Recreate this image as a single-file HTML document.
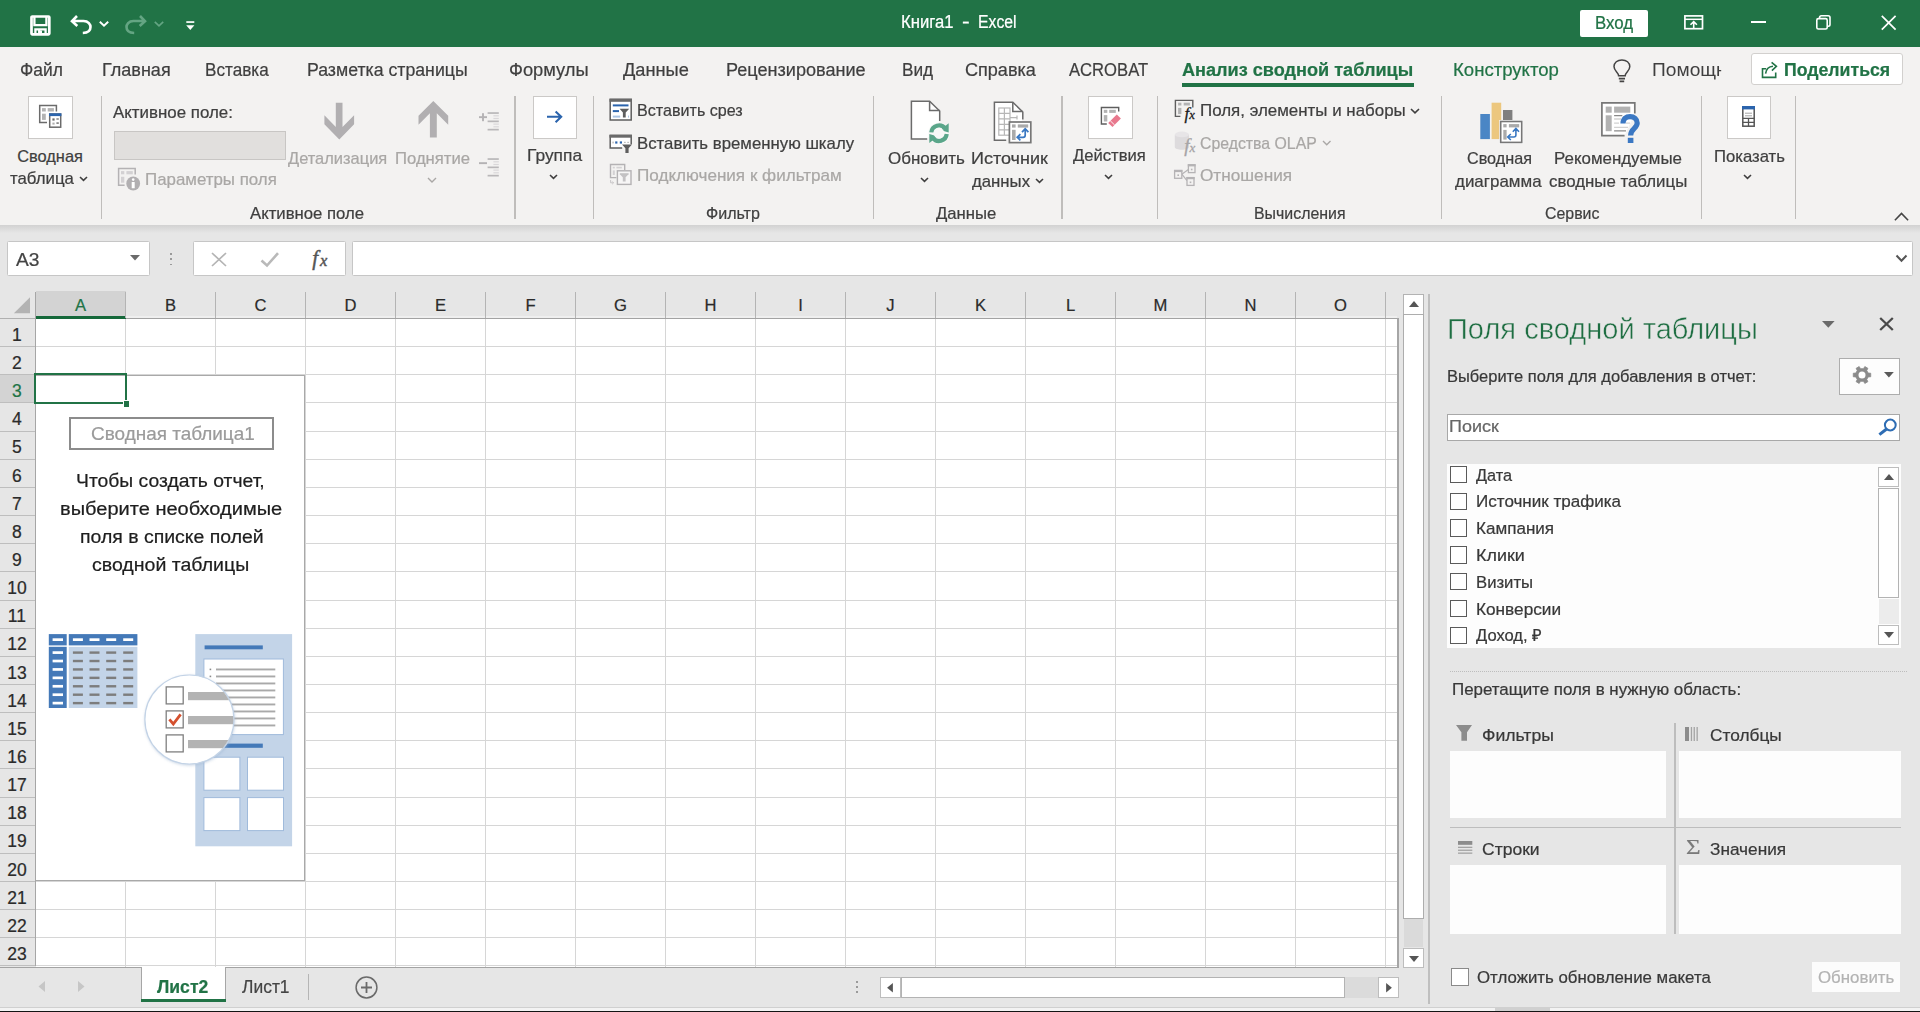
<!DOCTYPE html>
<html lang="ru"><head><meta charset="utf-8"><title>Книга1 - Excel</title>
<style>
html,body{margin:0;padding:0;}
body{width:1920px;height:1012px;overflow:hidden;position:relative;background:#e6e6e6;font-family:"Liberation Sans",sans-serif;}
.a{position:absolute;box-sizing:border-box;}
.t{position:absolute;white-space:nowrap;line-height:1;transform-origin:0 0;font-family:"Liberation Sans",sans-serif;-webkit-text-stroke:0.22px currentColor;}
svg{overflow:visible;}
</style></head><body>
<div class="a" style="left:0.00px;top:0.00px;width:1920.00px;height:47.40px;background:#217346;"></div>
<div class="a" style="left:1580.00px;top:10.00px;width:67.50px;height:26.50px;background:#fff;border-radius:2px;"></div>
<div class="a" style="left:0.00px;top:47.40px;width:1920.00px;height:177.20px;background:#f3f2f1;"></div>
<div class="a" style="left:1182.00px;top:83.30px;width:231.70px;height:3.40px;background:#217346;"></div>
<div class="a" style="left:1750.50px;top:53.00px;width:152.00px;height:32.00px;background:#fff;border:1px solid #d2d0ce;border-radius:3px;"></div>
<div class="a" style="left:0.00px;top:224.60px;width:1920.00px;height:8.00px;background:linear-gradient(#d2d2d2,#e6e6e6);"></div>
<div class="a" style="left:100.70px;top:96.00px;width:1.30px;height:123.00px;background:#bfbdbb;"></div>
<div class="a" style="left:514.40px;top:96.00px;width:1.30px;height:123.00px;background:#bfbdbb;"></div>
<div class="a" style="left:593.10px;top:96.00px;width:1.30px;height:123.00px;background:#bfbdbb;"></div>
<div class="a" style="left:872.90px;top:96.00px;width:1.30px;height:123.00px;background:#bfbdbb;"></div>
<div class="a" style="left:1061.40px;top:96.00px;width:1.30px;height:123.00px;background:#bfbdbb;"></div>
<div class="a" style="left:1156.90px;top:96.00px;width:1.30px;height:123.00px;background:#bfbdbb;"></div>
<div class="a" style="left:1441.10px;top:96.00px;width:1.30px;height:123.00px;background:#bfbdbb;"></div>
<div class="a" style="left:1701.20px;top:96.00px;width:1.30px;height:123.00px;background:#bfbdbb;"></div>
<div class="a" style="left:1795.20px;top:96.00px;width:1.30px;height:123.00px;background:#bfbdbb;"></div>
<div class="a" style="left:28.00px;top:95.80px;width:44.70px;height:43.00px;background:#fff;border:1.2px solid #cbc9c7;"></div>
<svg class="a" style="left:78.50px;top:175.50px;" width="9" height="5.9" viewBox="0 0 9 5.9"><path d="M1 1 L4.50 4.30 L8 1" fill="none" stroke="#3f3f3f" stroke-width="1.6"/></svg>
<div class="a" style="left:113.70px;top:130.80px;width:172.60px;height:29.00px;background:#e1dfdd;border:1px solid #c8c6c4;"></div>
<svg class="a" style="left:427.00px;top:177.00px;" width="10" height="6.5" viewBox="0 0 10 6.5"><path d="M1 1 L5.00 4.90 L9 1" fill="none" stroke="#a9a7a5" stroke-width="1.4"/></svg>
<div class="a" style="left:532.70px;top:95.80px;width:44.70px;height:43.00px;background:#fff;border:1.2px solid #cbc9c7;"></div>
<svg class="a" style="left:549.00px;top:174.00px;" width="9" height="5.9" viewBox="0 0 9 5.9"><path d="M1 1 L4.50 4.30 L8 1" fill="none" stroke="#3f3f3f" stroke-width="1.6"/></svg>
<svg class="a" style="left:920.00px;top:177.00px;" width="9" height="5.9" viewBox="0 0 9 5.9"><path d="M1 1 L4.50 4.30 L8 1" fill="none" stroke="#3f3f3f" stroke-width="1.6"/></svg>
<svg class="a" style="left:1034.50px;top:178.00px;" width="9" height="5.9" viewBox="0 0 9 5.9"><path d="M1 1 L4.50 4.30 L8 1" fill="none" stroke="#3f3f3f" stroke-width="1.6"/></svg>
<div class="a" style="left:1088.20px;top:95.80px;width:44.70px;height:43.00px;background:#fff;border:1.2px solid #cbc9c7;"></div>
<svg class="a" style="left:1104.30px;top:174.00px;" width="9" height="5.9" viewBox="0 0 9 5.9"><path d="M1 1 L4.50 4.30 L8 1" fill="none" stroke="#3f3f3f" stroke-width="1.6"/></svg>
<svg class="a" style="left:1409.80px;top:107.50px;" width="10" height="6.5" viewBox="0 0 10 6.5"><path d="M1 1 L5.00 4.90 L9 1" fill="none" stroke="#3f3f3f" stroke-width="1.6"/></svg>
<svg class="a" style="left:1321.50px;top:140.00px;" width="9.5" height="6.3" viewBox="0 0 9.5 6.3"><path d="M1 1 L4.75 4.70 L8.5 1" fill="none" stroke="#a9a7a5" stroke-width="1.4"/></svg>
<div class="a" style="left:1726.60px;top:95.80px;width:44.70px;height:43.00px;background:#fff;border:1.2px solid #cbc9c7;"></div>
<svg class="a" style="left:1743.00px;top:174.00px;" width="9" height="5.9" viewBox="0 0 9 5.9"><path d="M1 1 L4.50 4.30 L8 1" fill="none" stroke="#3f3f3f" stroke-width="1.6"/></svg>
<svg class="a" style="left:1893.00px;top:210.60px;" width="17" height="11" viewBox="0 0 17 11"><path d="M1.9 9.2 L8.5 2.5 L15.1 9.2" fill="none" stroke="#444" stroke-width="1.6"/></svg>
<div class="a" style="left:7.30px;top:240.90px;width:142.30px;height:35.40px;background:#fff;border:1.4px solid #c6c6c6;border-radius:1.5px;"></div>
<svg class="a" style="left:130.00px;top:254.60px;" width="10" height="5.6" viewBox="0 0 10 5.6"><path d="M0 0 H10 L5.0 5.6 Z" fill="#6a6a6a"/></svg>
<div class="a" style="left:170.00px;top:253.20px;width:1.80px;height:1.80px;background:#9a9a9a;"></div>
<div class="a" style="left:170.00px;top:258.40px;width:1.80px;height:1.80px;background:#9a9a9a;"></div>
<div class="a" style="left:170.00px;top:263.60px;width:1.80px;height:1.80px;background:#9a9a9a;"></div>
<div class="a" style="left:192.70px;top:240.90px;width:153.80px;height:35.40px;background:#fff;border:1.4px solid #c6c6c6;border-radius:1.5px;"></div>
<svg class="a" style="left:211.00px;top:252.00px;" width="16" height="15" viewBox="0 0 16 15"><path d="M1 1 L15 14 M15 1 L1 14" stroke="#b4b4b4" stroke-width="1.7" fill="none"/></svg>
<svg class="a" style="left:260.00px;top:252.00px;" width="20" height="15" viewBox="0 0 20 15"><path d="M1.5 8.5 L7 13.5 L18 1.2" stroke="#b9b9b9" stroke-width="2.6" fill="none"/></svg>
<div class="a" style="left:351.70px;top:240.90px;width:1561.20px;height:35.40px;background:#fff;border:1.4px solid #c6c6c6;border-radius:1.5px;"></div>
<svg class="a" style="left:1895.00px;top:254.00px;" width="13" height="9" viewBox="0 0 13 9"><path d="M1.5 1.5 L6.5 6.8 L11.5 1.5" fill="none" stroke="#555" stroke-width="2"/></svg>
<div class="a" style="left:35.50px;top:318.30px;width:1362.00px;height:649.20px;background:#fff;"></div>
<div class="a" style="left:0.00px;top:291.20px;width:1397.50px;height:27.10px;background:#e6e6e6;"></div>
<div class="a" style="left:0.00px;top:318.30px;width:35.50px;height:649.50px;background:#e6e6e6;"></div>
<div class="a" style="left:36.00px;top:291.20px;width:90.00px;height:25.10px;background:#d3d3d3;"></div>
<div class="a" style="left:35.20px;top:316.00px;width:91.00px;height:3.10px;background:#15683a;"></div>
<div class="a" style="left:0.00px;top:375.10px;width:35.00px;height:28.15px;background:#d3d3d3;"></div>
<svg class="a" style="left:13.40px;top:296.00px;" width="18" height="18" viewBox="0 0 18 18"><path d="M17 1.2 V17.3 H0.9 Z" fill="#b3b3b3"/></svg>
<div class="a" style="left:34.60px;top:291.70px;width:1.50px;height:27.10px;background:#a6a6a6;"></div>
<div class="a" style="left:0.00px;top:317.90px;width:35.50px;height:1.50px;background:#b0b0b0;"></div>
<div class="a" style="left:126.10px;top:317.60px;width:1271.40px;height:1.60px;background:#a3a3a3;"></div>
<div class="a" style="left:126.10px;top:316.40px;width:1271.40px;height:1.20px;background:#efefef;"></div>
<div class="a" style="left:124.75px;top:292.20px;width:1.40px;height:26.10px;background:#b4b4b4;"></div>
<div class="a" style="left:214.75px;top:292.20px;width:1.40px;height:26.10px;background:#b4b4b4;"></div>
<div class="a" style="left:304.75px;top:292.20px;width:1.40px;height:26.10px;background:#b4b4b4;"></div>
<div class="a" style="left:394.75px;top:292.20px;width:1.40px;height:26.10px;background:#b4b4b4;"></div>
<div class="a" style="left:484.75px;top:292.20px;width:1.40px;height:26.10px;background:#b4b4b4;"></div>
<div class="a" style="left:574.75px;top:292.20px;width:1.40px;height:26.10px;background:#b4b4b4;"></div>
<div class="a" style="left:664.75px;top:292.20px;width:1.40px;height:26.10px;background:#b4b4b4;"></div>
<div class="a" style="left:754.75px;top:292.20px;width:1.40px;height:26.10px;background:#b4b4b4;"></div>
<div class="a" style="left:844.75px;top:292.20px;width:1.40px;height:26.10px;background:#b4b4b4;"></div>
<div class="a" style="left:934.75px;top:292.20px;width:1.40px;height:26.10px;background:#b4b4b4;"></div>
<div class="a" style="left:1024.75px;top:292.20px;width:1.40px;height:26.10px;background:#b4b4b4;"></div>
<div class="a" style="left:1114.75px;top:292.20px;width:1.40px;height:26.10px;background:#b4b4b4;"></div>
<div class="a" style="left:1204.75px;top:292.20px;width:1.40px;height:26.10px;background:#b4b4b4;"></div>
<div class="a" style="left:1294.75px;top:292.20px;width:1.40px;height:26.10px;background:#b4b4b4;"></div>
<div class="a" style="left:1384.75px;top:292.20px;width:1.40px;height:26.10px;background:#b4b4b4;"></div>
<div class="a" style="left:124.85px;top:319.30px;width:1.10px;height:648.00px;background:#d6d6d6;"></div>
<div class="a" style="left:214.85px;top:319.30px;width:1.10px;height:648.00px;background:#d6d6d6;"></div>
<div class="a" style="left:304.85px;top:319.30px;width:1.10px;height:648.00px;background:#d6d6d6;"></div>
<div class="a" style="left:394.85px;top:319.30px;width:1.10px;height:648.00px;background:#d6d6d6;"></div>
<div class="a" style="left:484.85px;top:319.30px;width:1.10px;height:648.00px;background:#d6d6d6;"></div>
<div class="a" style="left:574.85px;top:319.30px;width:1.10px;height:648.00px;background:#d6d6d6;"></div>
<div class="a" style="left:664.85px;top:319.30px;width:1.10px;height:648.00px;background:#d6d6d6;"></div>
<div class="a" style="left:754.85px;top:319.30px;width:1.10px;height:648.00px;background:#d6d6d6;"></div>
<div class="a" style="left:844.85px;top:319.30px;width:1.10px;height:648.00px;background:#d6d6d6;"></div>
<div class="a" style="left:934.85px;top:319.30px;width:1.10px;height:648.00px;background:#d6d6d6;"></div>
<div class="a" style="left:1024.85px;top:319.30px;width:1.10px;height:648.00px;background:#d6d6d6;"></div>
<div class="a" style="left:1114.85px;top:319.30px;width:1.10px;height:648.00px;background:#d6d6d6;"></div>
<div class="a" style="left:1204.85px;top:319.30px;width:1.10px;height:648.00px;background:#d6d6d6;"></div>
<div class="a" style="left:1294.85px;top:319.30px;width:1.10px;height:648.00px;background:#d6d6d6;"></div>
<div class="a" style="left:1384.85px;top:319.30px;width:1.10px;height:648.00px;background:#d6d6d6;"></div>
<div class="a" style="left:35.50px;top:346.00px;width:1362.00px;height:1.00px;background:#d6d6d6;"></div>
<div class="a" style="left:0.00px;top:346.00px;width:35.50px;height:1.00px;background:#bebebe;"></div>
<div class="a" style="left:35.50px;top:374.00px;width:1362.00px;height:1.00px;background:#d6d6d6;"></div>
<div class="a" style="left:0.00px;top:374.00px;width:35.50px;height:1.00px;background:#bebebe;"></div>
<div class="a" style="left:35.50px;top:402.00px;width:1362.00px;height:1.00px;background:#d6d6d6;"></div>
<div class="a" style="left:0.00px;top:402.00px;width:35.50px;height:1.00px;background:#bebebe;"></div>
<div class="a" style="left:35.50px;top:431.00px;width:1362.00px;height:1.00px;background:#d6d6d6;"></div>
<div class="a" style="left:0.00px;top:431.00px;width:35.50px;height:1.00px;background:#bebebe;"></div>
<div class="a" style="left:35.50px;top:459.00px;width:1362.00px;height:1.00px;background:#d6d6d6;"></div>
<div class="a" style="left:0.00px;top:459.00px;width:35.50px;height:1.00px;background:#bebebe;"></div>
<div class="a" style="left:35.50px;top:487.00px;width:1362.00px;height:1.00px;background:#d6d6d6;"></div>
<div class="a" style="left:0.00px;top:487.00px;width:35.50px;height:1.00px;background:#bebebe;"></div>
<div class="a" style="left:35.50px;top:515.00px;width:1362.00px;height:1.00px;background:#d6d6d6;"></div>
<div class="a" style="left:0.00px;top:515.00px;width:35.50px;height:1.00px;background:#bebebe;"></div>
<div class="a" style="left:35.50px;top:543.00px;width:1362.00px;height:1.00px;background:#d6d6d6;"></div>
<div class="a" style="left:0.00px;top:543.00px;width:35.50px;height:1.00px;background:#bebebe;"></div>
<div class="a" style="left:35.50px;top:571.00px;width:1362.00px;height:1.00px;background:#d6d6d6;"></div>
<div class="a" style="left:0.00px;top:571.00px;width:35.50px;height:1.00px;background:#bebebe;"></div>
<div class="a" style="left:35.50px;top:600.00px;width:1362.00px;height:1.00px;background:#d6d6d6;"></div>
<div class="a" style="left:0.00px;top:600.00px;width:35.50px;height:1.00px;background:#bebebe;"></div>
<div class="a" style="left:35.50px;top:628.00px;width:1362.00px;height:1.00px;background:#d6d6d6;"></div>
<div class="a" style="left:0.00px;top:628.00px;width:35.50px;height:1.00px;background:#bebebe;"></div>
<div class="a" style="left:35.50px;top:656.00px;width:1362.00px;height:1.00px;background:#d6d6d6;"></div>
<div class="a" style="left:0.00px;top:656.00px;width:35.50px;height:1.00px;background:#bebebe;"></div>
<div class="a" style="left:35.50px;top:684.00px;width:1362.00px;height:1.00px;background:#d6d6d6;"></div>
<div class="a" style="left:0.00px;top:684.00px;width:35.50px;height:1.00px;background:#bebebe;"></div>
<div class="a" style="left:35.50px;top:712.00px;width:1362.00px;height:1.00px;background:#d6d6d6;"></div>
<div class="a" style="left:0.00px;top:712.00px;width:35.50px;height:1.00px;background:#bebebe;"></div>
<div class="a" style="left:35.50px;top:740.00px;width:1362.00px;height:1.00px;background:#d6d6d6;"></div>
<div class="a" style="left:0.00px;top:740.00px;width:35.50px;height:1.00px;background:#bebebe;"></div>
<div class="a" style="left:35.50px;top:768.00px;width:1362.00px;height:1.00px;background:#d6d6d6;"></div>
<div class="a" style="left:0.00px;top:768.00px;width:35.50px;height:1.00px;background:#bebebe;"></div>
<div class="a" style="left:35.50px;top:797.00px;width:1362.00px;height:1.00px;background:#d6d6d6;"></div>
<div class="a" style="left:0.00px;top:797.00px;width:35.50px;height:1.00px;background:#bebebe;"></div>
<div class="a" style="left:35.50px;top:825.00px;width:1362.00px;height:1.00px;background:#d6d6d6;"></div>
<div class="a" style="left:0.00px;top:825.00px;width:35.50px;height:1.00px;background:#bebebe;"></div>
<div class="a" style="left:35.50px;top:853.00px;width:1362.00px;height:1.00px;background:#d6d6d6;"></div>
<div class="a" style="left:0.00px;top:853.00px;width:35.50px;height:1.00px;background:#bebebe;"></div>
<div class="a" style="left:35.50px;top:881.00px;width:1362.00px;height:1.00px;background:#d6d6d6;"></div>
<div class="a" style="left:0.00px;top:881.00px;width:35.50px;height:1.00px;background:#bebebe;"></div>
<div class="a" style="left:35.50px;top:909.00px;width:1362.00px;height:1.00px;background:#d6d6d6;"></div>
<div class="a" style="left:0.00px;top:909.00px;width:35.50px;height:1.00px;background:#bebebe;"></div>
<div class="a" style="left:35.50px;top:937.00px;width:1362.00px;height:1.00px;background:#d6d6d6;"></div>
<div class="a" style="left:0.00px;top:937.00px;width:35.50px;height:1.00px;background:#bebebe;"></div>
<div class="a" style="left:35.50px;top:965.00px;width:1362.00px;height:1.00px;background:#d6d6d6;"></div>
<div class="a" style="left:0.00px;top:965.00px;width:35.50px;height:1.00px;background:#bebebe;"></div>
<div class="a" style="left:34.60px;top:318.30px;width:1.50px;height:648.00px;background:#a6a6a6;"></div>
<div class="a" style="left:1397.30px;top:318.30px;width:1.30px;height:650.20px;background:#a6a6a6;"></div>
<div class="a" style="left:0.00px;top:967.10px;width:1398.50px;height:1.30px;background:#a3a3a3;"></div>
<div class="a" style="left:36.10px;top:375.00px;width:269.20px;height:505.60px;background:#fff;border-right:1.4px solid #a9a9a9;border-bottom:1.4px solid #a9a9a9;border-top:1.2px solid #a9a9a9;"></div>
<div class="a" style="left:34.20px;top:373.40px;width:92.60px;height:30.95px;border:2.6px solid #217346;"></div>
<div class="a" style="left:122.70px;top:400.15px;width:7.40px;height:7.40px;background:#217346;border:1.2px solid #fff;"></div>
<div class="a" style="left:69.00px;top:417.00px;width:204.50px;height:32.50px;background:#fff;border:2px solid #8c8c8c;"></div>
<svg class="a" style="left:37.50px;top:981.00px;" width="7" height="11" viewBox="0 0 7 11"><path d="M7 0 V11 L0.5 5.5 Z" fill="#c6c6c6"/></svg>
<svg class="a" style="left:78.00px;top:981.00px;" width="7" height="11" viewBox="0 0 7 11"><path d="M0 0 V11 L6.5 5.5 Z" fill="#c6c6c6"/></svg>
<div class="a" style="left:140.60px;top:967.20px;width:85.40px;height:35.00px;background:#fff;border-left:1.2px solid #a6a6a6;border-right:1.2px solid #a6a6a6;"></div>
<div class="a" style="left:140.60px;top:999.40px;width:85.40px;height:2.80px;background:#217346;"></div>
<div class="a" style="left:307.50px;top:973.50px;width:1.30px;height:26.50px;background:#b5b5b5;"></div>
<svg class="a" style="left:355.00px;top:976.00px;" width="23" height="23" viewBox="0 0 23 23"><circle cx="11.5" cy="11.5" r="10.4" fill="none" stroke="#6a6a6a" stroke-width="1.5"/><path d="M11.5 6 V17 M6 11.5 H17" stroke="#6a6a6a" stroke-width="1.8"/></svg>
<div class="a" style="left:856.20px;top:981.00px;width:1.80px;height:1.80px;background:#9a9a9a;"></div>
<div class="a" style="left:856.20px;top:986.20px;width:1.80px;height:1.80px;background:#9a9a9a;"></div>
<div class="a" style="left:856.20px;top:991.40px;width:1.80px;height:1.80px;background:#9a9a9a;"></div>
<div class="a" style="left:880.00px;top:977.40px;width:20.50px;height:20.40px;background:#fff;border:1px solid #bdbdbd;"></div>
<svg class="a" style="left:887.00px;top:982.70px;" width="6" height="10" viewBox="0 0 6 10"><path d="M5.9 0 V9.6 L0.1 4.8 Z" fill="#555"/></svg>
<div class="a" style="left:1344.00px;top:977.40px;width:34.00px;height:20.40px;background:#dbdbdb;"></div>
<div class="a" style="left:900.60px;top:977.40px;width:444.20px;height:20.40px;background:#fff;border:1px solid #b3b3b3;"></div>
<div class="a" style="left:1378.00px;top:977.40px;width:20.50px;height:20.40px;background:#fff;border:1px solid #bdbdbd;"></div>
<svg class="a" style="left:1385.60px;top:982.70px;" width="6" height="10" viewBox="0 0 6 10"><path d="M0.1 0 V9.6 L5.9 4.8 Z" fill="#555"/></svg>
<div class="a" style="left:1403.20px;top:294.00px;width:20.50px;height:20.60px;background:#fff;border:1.2px solid #b3b3b3;"></div>
<svg class="a" style="left:1408.50px;top:300.80px;" width="10" height="6" viewBox="0 0 10 6"><path d="M0 5.9 H10 L5 0.1 Z" fill="#555"/></svg>
<div class="a" style="left:1403.20px;top:314.20px;width:20.50px;height:604.80px;background:#fff;border:1.2px solid #adadad;"></div>
<div class="a" style="left:1403.60px;top:919.00px;width:19.80px;height:28.00px;background:#dadada;"></div>
<div class="a" style="left:1403.20px;top:948.20px;width:20.50px;height:20.20px;background:#fff;border:1px solid #bdbdbd;"></div>
<svg class="a" style="left:1408.50px;top:956.00px;" width="10" height="6" viewBox="0 0 10 6"><path d="M0 0.1 H10 L5 5.9 Z" fill="#555"/></svg>
<div class="a" style="left:1428.10px;top:294.00px;width:1.50px;height:709.70px;background:#bfbfbf;"></div>
<div class="a" style="left:0.00px;top:1006.80px;width:1920.00px;height:1.30px;background:#d0d0d0;"></div>
<div class="a" style="left:0.00px;top:1008.00px;width:1920.00px;height:2.80px;background:#f3f3f3;"></div>
<div class="a" style="left:1494.80px;top:1008.30px;width:55.20px;height:2.50px;background:#d0d0d0;"></div>
<div class="a" style="left:0.00px;top:1010.60px;width:1920.00px;height:1.40px;background:#141414;"></div>
<svg class="a" style="left:1822.00px;top:320.80px;" width="12.6" height="6.8" viewBox="0 0 12.6 6.8"><path d="M0 0 H12.6 L6.3 6.8 Z" fill="#6a6a6a"/></svg>
<svg class="a" style="left:1879.00px;top:316.50px;" width="15" height="14" viewBox="0 0 15 14"><path d="M1.2 1 L13.8 13 M13.8 1 L1.2 13" stroke="#4a4a4a" stroke-width="2.3" fill="none"/></svg>
<div class="a" style="left:1839.20px;top:357.50px;width:61.00px;height:37.10px;background:#fdfdfd;border:1.3px solid #adadad;"></div>
<svg class="a" style="left:1883.80px;top:372.40px;" width="9.8" height="5.4" viewBox="0 0 9.8 5.4"><path d="M0 0 H9.8 L4.9 5.4 Z" fill="#5a5a5a"/></svg>
<div class="a" style="left:1446.50px;top:413.70px;width:453.70px;height:27.40px;background:#fff;border:1.5px solid #a8a8a8;"></div>
<div class="a" style="left:1446.60px;top:463.90px;width:454.30px;height:183.80px;background:#fdfdfd;"></div>
<div class="a" style="left:1449.70px;top:465.70px;width:17.80px;height:17.60px;background:#fff;border:1.3px solid #5a5a5a;"></div>
<div class="a" style="left:1449.70px;top:492.50px;width:17.80px;height:17.60px;background:#fff;border:1.3px solid #5a5a5a;"></div>
<div class="a" style="left:1449.70px;top:519.30px;width:17.80px;height:17.60px;background:#fff;border:1.3px solid #5a5a5a;"></div>
<div class="a" style="left:1449.70px;top:546.10px;width:17.80px;height:17.60px;background:#fff;border:1.3px solid #5a5a5a;"></div>
<div class="a" style="left:1449.70px;top:572.90px;width:17.80px;height:17.60px;background:#fff;border:1.3px solid #5a5a5a;"></div>
<div class="a" style="left:1449.70px;top:599.70px;width:17.80px;height:17.60px;background:#fff;border:1.3px solid #5a5a5a;"></div>
<div class="a" style="left:1449.70px;top:626.50px;width:17.80px;height:17.60px;background:#fff;border:1.3px solid #5a5a5a;"></div>
<div class="a" style="left:1878.40px;top:467.00px;width:20.50px;height:20.40px;background:#fff;border:1px solid #bdbdbd;"></div>
<svg class="a" style="left:1883.70px;top:474.30px;" width="10" height="6" viewBox="0 0 10 6"><path d="M0 5.9 H10 L5 0.1 Z" fill="#555"/></svg>
<div class="a" style="left:1878.40px;top:488.20px;width:20.50px;height:110.20px;background:#fff;border:1px solid #b3b3b3;"></div>
<div class="a" style="left:1878.80px;top:598.60px;width:19.80px;height:25.60px;background:#ececec;"></div>
<div class="a" style="left:1878.40px;top:624.60px;width:20.50px;height:20.60px;background:#fff;border:1px solid #bdbdbd;"></div>
<svg class="a" style="left:1883.70px;top:632.20px;" width="10" height="6" viewBox="0 0 10 6"><path d="M0 0.1 H10 L5 5.9 Z" fill="#555"/></svg>
<div class="a" style="left:1450px;top:670.6px;width:457px;height:0;border-top:1.4px dotted #bdbdbd;"></div>
<div class="a" style="left:1450.40px;top:751.30px;width:215.60px;height:67.20px;background:#fdfdfd;"></div>
<div class="a" style="left:1450.40px;top:864.80px;width:215.60px;height:68.90px;background:#fdfdfd;"></div>
<div class="a" style="left:1678.90px;top:751.30px;width:222.00px;height:67.20px;background:#fdfdfd;"></div>
<div class="a" style="left:1678.90px;top:864.80px;width:222.00px;height:68.90px;background:#fdfdfd;"></div>
<div class="a" style="left:1674.30px;top:723.00px;width:1.50px;height:211.00px;background:#bdbdbd;"></div>
<div class="a" style="left:1450.40px;top:826.60px;width:450.50px;height:1.50px;background:#bdbdbd;"></div>
<div class="a" style="left:1451.00px;top:967.70px;width:18.00px;height:18.00px;background:#fff;border:1.3px solid #8a8a8a;"></div>
<div class="a" style="left:1812.00px;top:962.00px;width:87.80px;height:29.50px;background:#fcfcfc;"></div>
<svg class="a" style="left:30.00px;top:14.50px;" width="21" height="21" viewBox="0 0 21 21"><rect x="1.5" y="1.5" width="17.8" height="17.8" rx="0.8" fill="none" stroke="#fff" stroke-width="2.7"/>
<path d="M4.4 1.5 V10.2 H16.4 V1.5" fill="none" stroke="#fff" stroke-width="2.3"/>
<path d="M5.4 19.5 V14.4 H15.6 V19.5 M9.2 14.4 V17 H12" fill="none" stroke="#fff" stroke-width="2.3"/></svg>
<svg class="a" style="left:70.00px;top:14.20px;" width="22" height="21" viewBox="0 0 22 21"><path d="M7 2 L2 7.2 L7.3 12 M2.4 7 H13.5 C18.5 7 20.5 10.5 20.5 13 C20.5 16.5 17.5 18.8 12.8 19" fill="none" stroke="#fff" stroke-width="2.6" stroke-linejoin="miter"/></svg>
<svg class="a" style="left:99.40px;top:20.50px;" width="10" height="6" viewBox="0 0 10 6"><path d="M0.8 0.8 L5 4.8 L9.2 0.8" fill="none" stroke="#fff" stroke-width="1.9"/></svg>
<svg class="a" style="left:125.20px;top:14.20px;" width="22" height="21" viewBox="0 0 22 21"><g transform="translate(22,0) scale(-1,1)"><path d="M7 2 L2 7.2 L7.3 12 M2.4 7 H13.5 C18.5 7 20.5 10.5 20.5 13 C20.5 16.5 17.5 18.8 12.8 19" fill="none" stroke="#64a583" stroke-width="2.6" stroke-linejoin="miter"/></g></svg>
<svg class="a" style="left:154.30px;top:20.50px;" width="10" height="6" viewBox="0 0 10 6"><path d="M0.8 0.8 L5 4.8 L9.2 0.8" fill="none" stroke="#64a583" stroke-width="1.7"/></svg>
<svg class="a" style="left:186.00px;top:21.00px;" width="9" height="10" viewBox="0 0 9 10"><rect x="0.3" y="0.2" width="8" height="1.7" fill="#fff"/><path d="M0.2 4.2 H8.4 L4.3 8.9 Z" fill="#fff"/></svg>
<svg class="a" style="left:1683.50px;top:15.30px;" width="20" height="15" viewBox="0 0 20 15"><rect x="0.9" y="0.9" width="17.6" height="12.8" fill="none" stroke="#fff" stroke-width="1.7"/><path d="M1 4.3 H18.5" stroke="#fff" stroke-width="1.5"/><path d="M9.7 13.5 V6.8 M6.5 9.8 L9.7 6.6 L12.9 9.8" fill="none" stroke="#fff" stroke-width="1.6"/></svg>
<div class="a" style="left:1751.00px;top:21.30px;width:15.00px;height:1.70px;background:#fff;"></div>
<svg class="a" style="left:1816.00px;top:15.30px;" width="15" height="15" viewBox="0 0 15 15"><rect x="0.8" y="3.6" width="10.4" height="10.4" rx="1.6" fill="none" stroke="#fff" stroke-width="1.6"/><path d="M3.6 3.4 V2.6 Q3.6 0.8 5.4 0.8 H12.2 Q14 0.8 14 2.6 V9.6 Q14 11.3 12.2 11.3 H11.4" fill="none" stroke="#fff" stroke-width="1.6"/></svg>
<svg class="a" style="left:1880.50px;top:15.30px;" width="16" height="16" viewBox="0 0 16 16"><path d="M0.8 0.8 L14.6 14.6 M14.6 0.8 L0.8 14.6" stroke="#fff" stroke-width="1.7" fill="none"/></svg>
<svg class="a" style="left:1612.50px;top:58.50px;" width="18" height="24" viewBox="0 0 18 24"><path d="M5.6 16.8 C5.6 13.6 1 12.2 1 7.6 C1 3.6 4.4 0.9 8.9 0.9 C13.4 0.9 16.8 3.6 16.8 7.6 C16.8 12.2 12.2 13.6 12.2 16.8 Z" fill="none" stroke="#444" stroke-width="1.5"/><path d="M5.8 19.6 H12 M6.6 22.4 H11.2" stroke="#444" stroke-width="1.6" fill="none"/></svg>
<svg class="a" style="left:1760.50px;top:60.50px;" width="18" height="18" viewBox="0 0 18 18"><path d="M5.2 7.8 H1.5 V16.4 H14.7 V11.4" fill="none" stroke="#217346" stroke-width="1.6"/><path d="M4.6 12.6 C5.2 8.2 8 5.6 12 5.3 M10.6 1.4 L15.4 5.4 L10.9 9.6" fill="none" stroke="#217346" stroke-width="1.6"/></svg>
<svg class="a" style="left:38.00px;top:104.00px;" width="25" height="25" viewBox="0 0 25 25"><path d="M18.4 7.5 V1.6 H1.7 V18.4 H9" fill="none" stroke="#6b6b6b" stroke-width="1.5"/>
<rect x="4" y="4.1" width="3.8" height="3.4" fill="#b3b3b3"/><rect x="9.7" y="4.1" width="6.2" height="3.4" fill="#b3b3b3"/><rect x="4" y="9.7" width="3.8" height="6.2" fill="#b3b3b3"/>
<rect x="11.7" y="10" width="11" height="13.2" fill="#fff" stroke="#6b6b6b" stroke-width="1.5"/><rect x="11" y="9.3" width="12.4" height="2.8" fill="#2b64ad"/>
<rect x="14.4" y="14.4" width="2.2" height="2.2" fill="#6b6b6b"/><rect x="18.4" y="14.2" width="2.4" height="1.6" fill="#8a8a8a"/><rect x="14.4" y="18.6" width="2.2" height="2" fill="#b0b0b0"/><rect x="18.4" y="18.2" width="2.4" height="1.8" fill="#8a8a8a"/></svg>
<svg class="a" style="left:117.00px;top:166.50px;" width="24" height="24" viewBox="0 0 24 24"><path d="M18.2 7.4 V1.6 H1.6 V18.2 H7.6" fill="none" stroke="#b4b2b4" stroke-width="1.5"/>
<rect x="4" y="4.1" width="3.3" height="3.2" fill="#d3d1d3"/><rect x="9.4" y="4.1" width="6.4" height="3.2" fill="#d3d1d3"/><rect x="4" y="9.8" width="3.3" height="5.9" fill="#d3d1d3"/>
<circle cx="16.2" cy="16.5" r="6.9" fill="#b1afb1"/><circle cx="16.2" cy="12.6" r="1.3" fill="#fff"/><rect x="14.7" y="15" width="3" height="6.3" rx="0.4" fill="#fff"/></svg>
<svg class="a" style="left:0;top:0" width="520" height="200"><polygon fill="#b1afb1" points="335.8,102.7 342.5,102.7 342.5,126.9 354.1,115.3 354.1,124.2 339.3,139.6 324.4,124.2 324.4,115.3 335.8,126.9"/><polygon fill="#b1afb1" points="433.3,101.1 448.2,115.8 448.2,124.7 436.8,113.3 436.8,137.6 429.9,137.6 429.9,113.3 418.5,124.7 418.5,115.8"/></svg>
<svg class="a" style="left:479.30px;top:112.30px;" width="21" height="19" viewBox="0 0 21 19"><rect x="8.6" y="0.2" width="11.2" height="1.7" fill="#b9b7b9"/><rect x="8.6" y="8.5" width="11.2" height="1.7" fill="#b9b7b9"/><rect x="8.6" y="16.8" width="11.2" height="1.7" fill="#b9b7b9"/><rect x="14.4" y="3.2" width="5.4" height="1.2" fill="#d9d7d9"/><rect x="14.4" y="5.9" width="5.4" height="1.2" fill="#d9d7d9"/><rect x="14.4" y="11.5" width="5.4" height="1.2" fill="#d9d7d9"/><rect x="14.4" y="14.2" width="5.4" height="1.2" fill="#d9d7d9"/><rect x="0" y="4.2" width="8" height="1.9" fill="#b4b2b4"/><rect x="3.05" y="1.2" width="1.9" height="8" fill="#b4b2b4"/></svg>
<svg class="a" style="left:479.30px;top:157.80px;" width="21" height="19" viewBox="0 0 21 19"><rect x="8.6" y="0.2" width="11.2" height="1.7" fill="#b9b7b9"/><rect x="8.6" y="8.5" width="11.2" height="1.7" fill="#b9b7b9"/><rect x="8.6" y="16.8" width="11.2" height="1.7" fill="#b9b7b9"/><rect x="14.4" y="3.2" width="5.4" height="1.2" fill="#d9d7d9"/><rect x="14.4" y="5.9" width="5.4" height="1.2" fill="#d9d7d9"/><rect x="14.4" y="11.5" width="5.4" height="1.2" fill="#d9d7d9"/><rect x="14.4" y="14.2" width="5.4" height="1.2" fill="#d9d7d9"/><rect x="0" y="4.2" width="8" height="1.9" fill="#b4b2b4"/></svg>
<svg class="a" style="left:545.50px;top:110.00px;" width="18" height="14" viewBox="0 0 18 14"><path d="M1 6.8 H14.6 M9.6 1.4 L15.2 6.8 L9.6 12.2" fill="none" stroke="#2b64ad" stroke-width="2.1"/></svg>
<svg class="a" style="left:609.00px;top:98.00px;" width="24" height="24" viewBox="0 0 24 24"><rect x="1.2" y="1.4" width="21" height="20.6" fill="#fff" stroke="#5e5e5e" stroke-width="1.5"/><rect x="0.5" y="0.7" width="22.4" height="3.1" fill="#6a6a6a"/>
<rect x="3.8" y="6.4" width="15.7" height="2" fill="#2b64ad"/><rect x="3.8" y="12.1" width="6.2" height="2" fill="#2b64ad"/><rect x="3.8" y="17.6" width="7.4" height="2" fill="#a9c4e4"/>
<path d="M10.6 10.8 H20.2 L16.7 14.6 V19.4 H13.9 V14.6 Z" fill="#5e5e5e"/><rect x="19" y="17.6" width="1" height="2" fill="#a9c4e4"/></svg>
<svg class="a" style="left:609.00px;top:133.60px;" width="24" height="20" viewBox="0 0 24 20"><path d="M13.2 14 H1.2 V1.4 H22.2 V10.2" fill="#fff" stroke="#5e5e5e" stroke-width="1.5"/><rect x="0.5" y="0.7" width="22.4" height="3" fill="#6a6a6a"/>
<rect x="6.2" y="7.4" width="2.2" height="2.2" fill="#2b64ad"/><rect x="10.8" y="7.4" width="2.2" height="2.2" fill="#2b64ad"/><rect x="3.6" y="7.6" width="0.9" height="1.8" fill="#9a9a9a"/><rect x="15.2" y="7.8" width="1.4" height="1.2" fill="#b0b0b0"/><rect x="18.4" y="7.8" width="1.4" height="1.2" fill="#b0b0b0"/>
<path d="M13 10.4 H23 L19.6 14.2 V18.9 H16.4 V14.2 Z" fill="#5e5e5e"/></svg>
<svg class="a" style="left:609.00px;top:163.00px;" width="24" height="23" viewBox="0 0 24 23"><path d="M15.7 7 V1.5 H1.5 V14.6 H7.4" fill="none" stroke="#b4b2b4" stroke-width="1.4"/>
<rect x="3.8" y="3.8" width="2" height="1.6" fill="#d3d1d3"/><rect x="7.4" y="3.8" width="5.4" height="1.6" fill="#d3d1d3"/><rect x="3.8" y="7.4" width="2" height="4.6" fill="#d3d1d3"/>
<rect x="8.4" y="7.8" width="13.6" height="13.6" fill="#f7f6f6" stroke="#b4b2b4" stroke-width="1.4"/>
<path d="M10.6 11 H19.8 L16.6 14.2 V18.4 H13.8 V14.2 Z" fill="#c4c2c4"/><rect x="10.8" y="10.2" width="8.8" height="1.2" fill="#c4c2c4"/>
<path d="M1.6 17 V19.8 H4.4 M3.2 18.4 L4.6 19.8 L3.2 21.2" fill="none" stroke="#c4c2c4" stroke-width="0.9"/></svg>
<svg class="a" style="left:910.00px;top:99.50px;" width="42" height="45" viewBox="0 0 42 45"><path d="M17.2 39 H1.4 V1.2 H19.6 L29.7 11 V21" fill="#fff" stroke="#6b6b6b" stroke-width="1.5"/><path d="M19.6 1.2 V10.6 H29.7" fill="none" stroke="#6b6b6b" stroke-width="1.5"/>
<g transform="translate(29,33.2)"><circle r="10.8" fill="#f8f8f7"/>
<path d="M-7.65 -0.8 A7.65 7.65 0 0 1 6.2 -4.5" fill="none" stroke="#5aa68a" stroke-width="4.3"/><path d="M9.7 -9.9 V-0.8 L1.2 -3.2 Z" fill="#5aa68a"/>
<path d="M7.65 0.8 A7.65 7.65 0 0 1 -6.2 4.5" fill="none" stroke="#5aa68a" stroke-width="4.3"/><path d="M-9.7 9.9 V0.8 L-1.2 3.2 Z" fill="#5aa68a"/>
<circle r="5.4" fill="#f8f8f7"/></g></svg>
<svg class="a" style="left:993.00px;top:100.60px;" width="40" height="44" viewBox="0 0 40 44"><path d="M13.2 39.3 H1.4 V1.2 H19.8 L29.8 11 V18.6" fill="#fff" stroke="#6b6b6b" stroke-width="1.5"/><path d="M19.8 1.2 V10.6 H29.8" fill="none" stroke="#6b6b6b" stroke-width="1.5"/><rect x="5.8" y="7" width="11.2" height="27.2" fill="none" stroke="#b7b7b7" stroke-width="1.2"/><path d="M11.4 7 V34 M5.8 12.4 H17 M5.8 17.9 H17 M5.8 23.3 H17 M5.8 28.8 H17 M17 16.6 H24 M24 14.4 V18.6 M17 23.3 H20 M17 28.8 H20" fill="none" stroke="#b7b7b7" stroke-width="1.2"/><rect x="16.4" y="21" width="21.4" height="20.6" fill="#fff" stroke="#777" stroke-width="1.7"/><rect x="19" y="23.4" width="3.6" height="3.2" fill="#aaa"/><rect x="24.8" y="23.4" width="10.4" height="3.2" fill="#aaa"/><rect x="19" y="28.8" width="3.6" height="10.2" fill="#aaa"/><path d="M24.4 36.3 H30.2 Q32.2 36.3 32.2 34.3 V28.6 M27.4 33.2 L24.2 36.3 L27.4 39.4 M29 31.2 L32.2 27.8 L35.4 31.2" fill="none" stroke="#3a78c2" stroke-width="1.7"/></svg>
<svg class="a" style="left:1100.00px;top:105.70px;" width="24" height="24" viewBox="0 0 24 24"><path d="M18.7 5.6 V1.5 H1.4 V18 H6.8" fill="none" stroke="#5e5e5e" stroke-width="1.4"/>
<rect x="3.8" y="3.8" width="3.5" height="3.1" fill="#b3b3b3"/><rect x="9.2" y="3.8" width="6.6" height="3.1" fill="#b3b3b3"/><rect x="3.8" y="9.1" width="3.5" height="6.4" fill="#b3b3b3"/>
<polygon points="16.8,8.6 20.9,12.6 12.5,20.9 8.2,16.9" fill="#e8788d"/><path d="M10.2 14.7 L14.6 19" stroke="#fff" stroke-width="0.9"/></svg>
<svg class="a" style="left:1174.40px;top:99.20px;" width="24" height="24" viewBox="0 0 24 24"><path d="M18.8 8.4 V1.4 H1.4 V17.4 H6.4" fill="none" stroke="#5e5e5e" stroke-width="1.4"/>
<rect x="4.1" y="3.7" width="3.3" height="2.8" fill="#b3b3b3"/><rect x="9.7" y="3.7" width="6.2" height="2.8" fill="#b3b3b3"/><rect x="4.1" y="8.9" width="3.3" height="6.2" fill="#b3b3b3"/></svg>
<svg class="a" style="left:1174.40px;top:131.40px;" width="18" height="20" viewBox="0 0 18 20"><path d="M0.8 3.4 V16 C0.8 19.6 15 19.6 15 16 V3.4 Z" fill="#dddbdd"/><ellipse cx="7.9" cy="3.4" rx="7.1" ry="2.8" fill="#e7e5e7"/></svg>
<svg class="a" style="left:1173.00px;top:162.50px;" width="24" height="24" viewBox="0 0 24 24"><path d="M8.8 11.2 L15.4 6.4 M8.8 11.2 L14 17.6" stroke="#b5b3b5" stroke-width="1.2" fill="none"/><rect x="1.6" y="7.5" width="7.2" height="7.8" fill="#f3f2f1" stroke="#b5b3b5" stroke-width="1.3"/><rect x="1.0" y="6.9" width="8.4" height="2.2" fill="#b5b3b5"/><rect x="4.4" y="11.4" width="1.6" height="1.6" fill="#b5b3b5"/><rect x="15.4" y="1.8" width="6.6" height="7.8" fill="#f3f2f1" stroke="#b5b3b5" stroke-width="1.3"/><rect x="14.8" y="1.2000000000000002" width="7.8" height="2.2" fill="#b5b3b5"/><rect x="17.9" y="5.7" width="1.6" height="1.6" fill="#b5b3b5"/><rect x="14" y="14.6" width="7" height="7.8" fill="#f3f2f1" stroke="#b5b3b5" stroke-width="1.3"/><rect x="13.4" y="14.0" width="8.2" height="2.2" fill="#b5b3b5"/><rect x="16.7" y="18.5" width="1.6" height="1.6" fill="#b5b3b5"/></svg>
<svg class="a" style="left:1480.00px;top:102.00px;" width="44" height="43" viewBox="0 0 44 43"><rect x="0.3" y="12" width="9.6" height="25.1" fill="#4a86c5"/><rect x="11.6" y="0.7" width="9.6" height="36.4" fill="#ecc77e"/><rect x="23" y="8" width="9.4" height="10" fill="#7f7f7f"/><rect x="19.2" y="18" width="24.1" height="24" fill="#f8f8f8"/><rect x="20.7" y="19.5" width="21" height="20.9" fill="#fff" stroke="#777" stroke-width="1.6"/><rect x="23.3" y="22.1" width="3.3" height="3.3" fill="#aaa"/><rect x="28.9" y="22.1" width="10.3" height="3.3" fill="#aaa"/><rect x="23.3" y="27.9" width="3.3" height="9.7" fill="#aaa"/><path d="M28 35 H33.9 Q35.9 35 35.9 33 V27.2 M30.8 32 L27.7 35 L30.8 38 M32.8 29.8 L35.9 26.5 L39 29.8" fill="none" stroke="#3a78c2" stroke-width="1.6"/></svg>
<svg class="a" style="left:1601.20px;top:101.70px;" width="42" height="44" viewBox="0 0 42 44"><path d="M33.8 11.4 V0.9 H0.9 V33.6 H23.6" fill="#fff" stroke="#777" stroke-width="1.7"/><rect x="4.7" y="4.6" width="6" height="6.1" fill="#b2b2b2"/><rect x="13.1" y="4.6" width="16.2" height="6.1" fill="#b2b2b2"/><rect x="4.7" y="13.3" width="6" height="15.9" fill="#b2b2b2"/><path d="M13.1 13.6 H21.3 M13.1 28.9 H25" stroke="#8a8a8a" stroke-width="1.3"/><path d="M13.1 17 H20 M13.1 21.1 H18 M25 21.1 H29 M13.1 25.4 H27" stroke="#d2d2d2" stroke-width="1.4"/><path d="M22 21.6 C22 16.8 25.2 14.6 29 14.6 C33.2 14.6 36.2 17.2 36.2 21 C36.2 26.4 29.6 26.4 29.6 33.6" fill="none" stroke="#3b78c3" stroke-width="5.2"/><rect x="26.8" y="35.8" width="5.6" height="5.2" fill="#3b78c3"/></svg>
<svg class="a" style="left:1741.70px;top:105.60px;" width="13" height="21" viewBox="0 0 13 21"><rect x="0.8" y="0.8" width="11.4" height="19.4" fill="#fff" stroke="#555" stroke-width="1.5"/><rect x="0" y="0" width="13" height="3.4" fill="#2b64ad"/><path d="M3 7.2 H10 M3 9.8 H10" stroke="#9a9a9a" stroke-width="0.9"/><path d="M0.8 12.3 H12.2 M0.8 16.3 H12.2 M6.5 12.3 V20.2" stroke="#555" stroke-width="1.3"/></svg>
<svg class="a" style="left:1851.90px;top:364.60px;" width="20" height="20" viewBox="0 0 20 20"><g transform="translate(10,10)"><path d="M6.21 -1.92 L8.72 -1.77 L8.72 1.77 L6.21 1.92 L4.77 4.42 L5.89 6.67 L2.83 8.44 L1.44 6.34 L-1.44 6.34 L-2.83 8.44 L-5.89 6.67 L-4.77 4.42 L-6.21 1.92 L-8.72 1.77 L-8.72 -1.77 L-6.21 -1.92 L-4.77 -4.42 L-5.89 -6.67 L-2.83 -8.44 L-1.44 -6.34 L1.44 -6.34 L2.83 -8.44 L5.89 -6.67 L4.77 -4.42 Z" fill="#8b8b8b" stroke="#8b8b8b" stroke-width="0.8" stroke-linejoin="round"/><circle r="3.5" fill="#fff"/></g></svg>
<svg class="a" style="left:1877.00px;top:417.00px;" width="22" height="20" viewBox="0 0 22 20"><circle cx="13.3" cy="8" r="5.4" fill="none" stroke="#2e6db4" stroke-width="2"/><path d="M9.6 12 L2.4 17.6" stroke="#2e6db4" stroke-width="3.1"/></svg>
<svg class="a" style="left:1456.00px;top:725.30px;" width="16" height="16" viewBox="0 0 16 16"><path d="M0 0 H16 L11 7.3 V15.7 H5.4 V7.3 Z" fill="#8c8c8c"/></svg>
<svg class="a" style="left:1685.40px;top:727.00px;" width="14" height="14" viewBox="0 0 14 14"><rect x="0" y="0" width="4" height="14" fill="#8c8c8c"/><rect x="5.8" y="0" width="1.3" height="14" fill="#a3a3a3"/><rect x="8.6" y="0" width="1.3" height="14" fill="#a3a3a3"/><rect x="11.5" y="0" width="1.3" height="14" fill="#a3a3a3"/></svg>
<svg class="a" style="left:1457.50px;top:841.00px;" width="15" height="13" viewBox="0 0 15 13"><rect x="0" y="0" width="14.3" height="3.8" fill="#8c8c8c"/><rect x="0" y="5.7" width="14.3" height="1.3" fill="#a3a3a3"/><rect x="0" y="8.6" width="14.3" height="1.3" fill="#a3a3a3"/><rect x="0" y="11.5" width="14.3" height="1.3" fill="#a3a3a3"/></svg>
<svg class="a" style="left:0;top:0" width="320" height="900" viewBox="0 0 320 900"><rect x="48.8" y="634.1" width="17.9" height="73.9" fill="#4479b8"/><rect x="68.8" y="634.1" width="68.6" height="11.3" fill="#4479b8"/><rect x="68.8" y="646.8" width="68.6" height="61.2" fill="#c3d4e8"/><rect x="72.9" y="638.3" width="10" height="2.7" fill="#fff"/><rect x="89.5" y="638.3" width="10" height="2.7" fill="#fff"/><rect x="106.2" y="638.3" width="10" height="2.7" fill="#fff"/><rect x="123.2" y="638.3" width="10" height="2.7" fill="#fff"/><rect x="52.6" y="638.3" width="10.4" height="2.7" fill="#fff"/><rect x="52.6" y="651.25" width="10.4" height="2.7" fill="#fff"/><rect x="72.9" y="651.40" width="10" height="2.4" fill="#7d7d7d"/><rect x="89.5" y="651.40" width="10" height="2.4" fill="#7d7d7d"/><rect x="106.2" y="651.40" width="10" height="2.4" fill="#7d7d7d"/><rect x="123.2" y="651.40" width="10" height="2.4" fill="#7d7d7d"/><rect x="52.6" y="659.67" width="10.4" height="2.7" fill="#fff"/><rect x="72.9" y="659.82" width="10" height="2.4" fill="#7d7d7d"/><rect x="89.5" y="659.82" width="10" height="2.4" fill="#7d7d7d"/><rect x="106.2" y="659.82" width="10" height="2.4" fill="#7d7d7d"/><rect x="123.2" y="659.82" width="10" height="2.4" fill="#7d7d7d"/><rect x="52.6" y="668.09" width="10.4" height="2.7" fill="#fff"/><rect x="72.9" y="668.24" width="10" height="2.4" fill="#7d7d7d"/><rect x="89.5" y="668.24" width="10" height="2.4" fill="#7d7d7d"/><rect x="106.2" y="668.24" width="10" height="2.4" fill="#7d7d7d"/><rect x="123.2" y="668.24" width="10" height="2.4" fill="#7d7d7d"/><rect x="52.6" y="676.51" width="10.4" height="2.7" fill="#fff"/><rect x="72.9" y="676.66" width="10" height="2.4" fill="#7d7d7d"/><rect x="89.5" y="676.66" width="10" height="2.4" fill="#7d7d7d"/><rect x="106.2" y="676.66" width="10" height="2.4" fill="#7d7d7d"/><rect x="123.2" y="676.66" width="10" height="2.4" fill="#7d7d7d"/><rect x="52.6" y="684.93" width="10.4" height="2.7" fill="#fff"/><rect x="72.9" y="685.08" width="10" height="2.4" fill="#7d7d7d"/><rect x="89.5" y="685.08" width="10" height="2.4" fill="#7d7d7d"/><rect x="106.2" y="685.08" width="10" height="2.4" fill="#7d7d7d"/><rect x="123.2" y="685.08" width="10" height="2.4" fill="#7d7d7d"/><rect x="52.6" y="693.35" width="10.4" height="2.7" fill="#fff"/><rect x="72.9" y="693.50" width="10" height="2.4" fill="#7d7d7d"/><rect x="89.5" y="693.50" width="10" height="2.4" fill="#7d7d7d"/><rect x="106.2" y="693.50" width="10" height="2.4" fill="#7d7d7d"/><rect x="123.2" y="693.50" width="10" height="2.4" fill="#7d7d7d"/><rect x="52.6" y="701.77" width="10.4" height="2.7" fill="#fff"/><rect x="72.9" y="701.92" width="10" height="2.4" fill="#7d7d7d"/><rect x="89.5" y="701.92" width="10" height="2.4" fill="#7d7d7d"/><rect x="106.2" y="701.92" width="10" height="2.4" fill="#7d7d7d"/><rect x="123.2" y="701.92" width="10" height="2.4" fill="#7d7d7d"/><rect x="195.3" y="634.1" width="96.8" height="212.2" fill="#c3d4e8"/><rect x="204.6" y="645.4" width="58.2" height="3.9" fill="#4479b8"/><rect x="203.9" y="659" width="79.5" height="75.6" fill="#fff" stroke="#9fbadb" stroke-width="1"/><rect x="216" y="668.5" width="59.3" height="1.9" fill="#a9a9a9"/><rect x="216" y="675.5" width="59.3" height="1.9" fill="#a9a9a9"/><rect x="216" y="682.5" width="59.3" height="1.9" fill="#a9a9a9"/><rect x="216" y="689.5" width="59.3" height="1.9" fill="#a9a9a9"/><rect x="216" y="696.5" width="59.3" height="1.9" fill="#a9a9a9"/><rect x="216" y="703.5" width="59.3" height="1.9" fill="#a9a9a9"/><rect x="216" y="710.5" width="59.3" height="1.9" fill="#a9a9a9"/><rect x="216" y="717.5" width="59.3" height="1.9" fill="#a9a9a9"/><rect x="216" y="724.5" width="59.3" height="1.9" fill="#a9a9a9"/><rect x="209.6" y="668.6" width="1.6" height="1.6" fill="#8a8a8a"/><rect x="209.6" y="675.6" width="1.6" height="1.6" fill="#8a8a8a"/><rect x="204.6" y="743.6" width="58.2" height="4.2" fill="#4479b8"/><rect x="203.9" y="757.2" width="36" height="33" fill="#fff" stroke="#9fbadb" stroke-width="1"/><rect x="203.9" y="797.6" width="36" height="33" fill="#fff" stroke="#9fbadb" stroke-width="1"/><rect x="247.5" y="757.2" width="36" height="33" fill="#fff" stroke="#9fbadb" stroke-width="1"/><rect x="247.5" y="797.6" width="36" height="33" fill="#fff" stroke="#9fbadb" stroke-width="1"/><defs><clipPath id="mc"><circle cx="189.4" cy="719.5" r="44"/></clipPath><filter id="sh" x="-20%" y="-20%" width="140%" height="140%"><feGaussianBlur stdDeviation="1.6"/></filter></defs><circle cx="189.8" cy="720.5" r="45" fill="#9db4d0" opacity="0.55" filter="url(#sh)"/><circle cx="189.4" cy="719.5" r="44.5" fill="#fff" stroke="#c3d3e6" stroke-width="1.2"/><g clip-path="url(#mc)"><rect x="188" y="692" width="60" height="8.2" fill="#b3b3b3"/><rect x="166.2" y="686.9" width="17" height="17" fill="#fff" stroke="#7f7f7f" stroke-width="1.3"/><rect x="188" y="716" width="60" height="8.2" fill="#b3b3b3"/><rect x="166.2" y="710.9" width="17" height="17" fill="#fff" stroke="#7f7f7f" stroke-width="1.3"/><rect x="188" y="740" width="60" height="8.2" fill="#b3b3b3"/><rect x="166.2" y="734.9" width="17" height="17" fill="#fff" stroke="#7f7f7f" stroke-width="1.3"/></g><rect x="48" y="645.4" width="20" height="1.4" fill="#fff"/><path d="M169.4 719.4 L173.3 724 L180.6 714.4" fill="none" stroke="#d4502e" stroke-width="2.8"/></svg>
<span class="t" style="left:900.83px;top:14.00px;font-size:17.5px;color:#fff;transform:scaleX(0.9520);">Книга1</span>
<span class="t" style="left:962.12px;top:14.00px;font-size:17.5px;color:#fff;transform:scaleX(1.3147);">-</span>
<span class="t" style="left:977.92px;top:14.00px;font-size:17.5px;color:#fff;transform:scaleX(0.9011);">Excel</span>
<span class="t" style="left:1595.12px;top:15.00px;font-size:17.5px;color:#217346;transform:scaleX(0.9639);">Вход</span>
<span class="t" style="left:20.43px;top:62.00px;font-size:17.5px;color:#3f3f3f;transform:scaleX(0.9961);">Файл</span>
<span class="t" style="left:101.62px;top:62.00px;font-size:17.5px;color:#3f3f3f;transform:scaleX(1.0308);">Главная</span>
<span class="t" style="left:204.62px;top:62.00px;font-size:17.5px;color:#3f3f3f;transform:scaleX(0.9787);">Вставка</span>
<span class="t" style="left:307.12px;top:62.00px;font-size:17.5px;color:#3f3f3f;transform:scaleX(1.0119);">Разметка страницы</span>
<span class="t" style="left:508.62px;top:62.00px;font-size:17.5px;color:#3f3f3f;transform:scaleX(1.0460);">Формулы</span>
<span class="t" style="left:622.92px;top:62.00px;font-size:17.5px;color:#3f3f3f;transform:scaleX(1.0416);">Данные</span>
<span class="t" style="left:726.12px;top:62.00px;font-size:17.5px;color:#3f3f3f;transform:scaleX(1.0335);">Рецензирование</span>
<span class="t" style="left:901.62px;top:62.00px;font-size:17.5px;color:#3f3f3f;transform:scaleX(0.9839);">Вид</span>
<span class="t" style="left:965.42px;top:62.00px;font-size:17.5px;color:#3f3f3f;transform:scaleX(1.0321);">Справка</span>
<span class="t" style="left:1068.62px;top:62.00px;font-size:17.5px;color:#3f3f3f;transform:scaleX(0.9504);">ACROBAT</span>
<span class="t" style="left:1181.62px;top:62.00px;font-size:17.5px;color:#217346;font-weight:700;transform:scaleX(1.0350);">Анализ сводной таблицы</span>
<span class="t" style="left:1452.92px;top:62.00px;font-size:17.5px;color:#217346;transform:scaleX(1.0609);">Конструктор</span>
<span class="t" style="left:1651.62px;top:62.00px;font-size:17.5px;color:#3f3f3f;transform:scaleX(1.0957);clip-path:inset(0 5px 0 0);-webkit-text-stroke:0;">Помощн</span>
<span class="t" style="left:1784.12px;top:62.00px;font-size:17.5px;color:#217346;font-weight:700;transform:scaleX(1.0108);">Поделиться</span>
<span class="t" style="left:17.18px;top:148.00px;font-size:16.4px;color:#3f3f3f;">Сводная</span>
<span class="t" style="left:10.48px;top:170.00px;font-size:16.4px;color:#3f3f3f;transform:scaleX(1.0261);">таблица</span>
<span class="t" style="left:112.88px;top:104.00px;font-size:16.4px;color:#3f3f3f;transform:scaleX(1.0301);">Активное поле:</span>
<span class="t" style="left:144.68px;top:171.00px;font-size:16.4px;color:#a9a7a5;transform:scaleX(1.0301);">Параметры поля</span>
<span class="t" style="left:288.18px;top:150.00px;font-size:16.4px;color:#a9a7a5;transform:scaleX(1.0037);">Детализация</span>
<span class="t" style="left:394.68px;top:150.00px;font-size:16.4px;color:#a9a7a5;transform:scaleX(1.0169);">Поднятие</span>
<span class="t" style="left:250.18px;top:205.00px;font-size:16.4px;color:#3f3f3f;transform:scaleX(1.0201);">Активное поле</span>
<span class="t" style="left:526.68px;top:147.00px;font-size:16.4px;color:#3f3f3f;transform:scaleX(1.0598);">Группа</span>
<span class="t" style="left:636.68px;top:102.00px;font-size:16.4px;color:#3f3f3f;transform:scaleX(0.9827);">Вставить срез</span>
<span class="t" style="left:636.68px;top:135.00px;font-size:16.4px;color:#3f3f3f;transform:scaleX(1.0236);">Вставить временную шкалу</span>
<span class="t" style="left:636.68px;top:167.00px;font-size:16.4px;color:#a9a7a5;transform:scaleX(1.0428);">Подключения к фильтрам</span>
<span class="t" style="left:705.88px;top:205.00px;font-size:16.4px;color:#3f3f3f;transform:scaleX(0.9781);">Фильтр</span>
<span class="t" style="left:887.88px;top:150.00px;font-size:16.4px;color:#3f3f3f;transform:scaleX(1.0356);">Обновить</span>
<span class="t" style="left:970.88px;top:150.00px;font-size:16.4px;color:#3f3f3f;transform:scaleX(1.0982);">Источник</span>
<span class="t" style="left:971.68px;top:173.00px;font-size:16.4px;color:#3f3f3f;transform:scaleX(1.0228);">данных</span>
<span class="t" style="left:936.18px;top:205.00px;font-size:16.4px;color:#3f3f3f;transform:scaleX(1.0192);">Данные</span>
<span class="t" style="left:1072.88px;top:147.00px;font-size:16.4px;color:#3f3f3f;transform:scaleX(1.0143);">Действия</span>
<span class="t" style="left:1199.98px;top:102.00px;font-size:16.4px;color:#3f3f3f;transform:scaleX(1.0323);">Поля, элементы и наборы</span>
<span class="t" style="left:1199.98px;top:135.00px;font-size:16.4px;color:#a9a7a5;transform:scaleX(0.9657);">Средства OLAP</span>
<span class="t" style="left:1199.98px;top:167.00px;font-size:16.4px;color:#a9a7a5;transform:scaleX(1.0487);">Отношения</span>
<span class="t" style="left:1253.88px;top:205.00px;font-size:16.4px;color:#3f3f3f;transform:scaleX(0.9702);">Вычисления</span>
<span class="t" style="left:1467.48px;top:150.00px;font-size:16.4px;color:#3f3f3f;transform:scaleX(0.9882);">Сводная</span>
<span class="t" style="left:1455.48px;top:173.00px;font-size:16.4px;color:#3f3f3f;transform:scaleX(1.0341);">диаграмма</span>
<span class="t" style="left:1554.48px;top:150.00px;font-size:16.4px;color:#3f3f3f;transform:scaleX(1.0311);">Рекомендуемые</span>
<span class="t" style="left:1549.18px;top:173.00px;font-size:16.4px;color:#3f3f3f;transform:scaleX(1.0277);">сводные таблицы</span>
<span class="t" style="left:1544.98px;top:205.00px;font-size:16.4px;color:#3f3f3f;transform:scaleX(0.9700);">Сервис</span>
<span class="t" style="left:1713.78px;top:148.00px;font-size:16.4px;color:#3f3f3f;transform:scaleX(1.0182);">Показать</span>
<span class="t" style="left:15.82px;top:252.00px;font-size:17.5px;color:#444;transform:scaleX(1.0961);">A3</span>
<span class="t" style="left:312.30px;top:248.00px;font-size:21px;color:#555;font-style:italic;font-family:'Liberation Serif', serif;-webkit-text-stroke:0.45px #555;">f</span>
<span class="t" style="left:320.00px;top:253.00px;font-size:16.5px;color:#555;font-style:italic;font-family:'Liberation Serif', serif;-webkit-text-stroke:0.45px #555;">x</span>
<span class="t" style="left:0.00px;top:298.00px;font-size:16.6px;color:#217346;left:35.5px;width:90px;text-align:center;">A</span>
<span class="t" style="left:0.00px;top:298.00px;font-size:16.6px;color:#2b2b2b;left:125.5px;width:90px;text-align:center;">B</span>
<span class="t" style="left:0.00px;top:298.00px;font-size:16.6px;color:#2b2b2b;left:215.5px;width:90px;text-align:center;">C</span>
<span class="t" style="left:0.00px;top:298.00px;font-size:16.6px;color:#2b2b2b;left:305.5px;width:90px;text-align:center;">D</span>
<span class="t" style="left:0.00px;top:298.00px;font-size:16.6px;color:#2b2b2b;left:395.5px;width:90px;text-align:center;">E</span>
<span class="t" style="left:0.00px;top:298.00px;font-size:16.6px;color:#2b2b2b;left:485.5px;width:90px;text-align:center;">F</span>
<span class="t" style="left:0.00px;top:298.00px;font-size:16.6px;color:#2b2b2b;left:575.5px;width:90px;text-align:center;">G</span>
<span class="t" style="left:0.00px;top:298.00px;font-size:16.6px;color:#2b2b2b;left:665.5px;width:90px;text-align:center;">H</span>
<span class="t" style="left:0.00px;top:298.00px;font-size:16.6px;color:#2b2b2b;left:755.5px;width:90px;text-align:center;">I</span>
<span class="t" style="left:0.00px;top:298.00px;font-size:16.6px;color:#2b2b2b;left:845.5px;width:90px;text-align:center;">J</span>
<span class="t" style="left:0.00px;top:298.00px;font-size:16.6px;color:#2b2b2b;left:935.5px;width:90px;text-align:center;">K</span>
<span class="t" style="left:0.00px;top:298.00px;font-size:16.6px;color:#2b2b2b;left:1025.5px;width:90px;text-align:center;">L</span>
<span class="t" style="left:0.00px;top:298.00px;font-size:16.6px;color:#2b2b2b;left:1115.5px;width:90px;text-align:center;">M</span>
<span class="t" style="left:0.00px;top:298.00px;font-size:16.6px;color:#2b2b2b;left:1205.5px;width:90px;text-align:center;">N</span>
<span class="t" style="left:0.00px;top:298.00px;font-size:16.6px;color:#2b2b2b;left:1295.5px;width:90px;text-align:center;">O</span>
<span class="t" style="left:0.00px;top:327.00px;font-size:17.5px;color:#2b2b2b;left:0px;width:33.9px;text-align:center;">1</span>
<span class="t" style="left:0.00px;top:355.00px;font-size:17.5px;color:#2b2b2b;left:0px;width:33.9px;text-align:center;">2</span>
<span class="t" style="left:0.00px;top:383.00px;font-size:17.5px;color:#217346;left:0px;width:33.9px;text-align:center;">3</span>
<span class="t" style="left:0.00px;top:411.00px;font-size:17.5px;color:#2b2b2b;left:0px;width:33.9px;text-align:center;">4</span>
<span class="t" style="left:0.00px;top:439.00px;font-size:17.5px;color:#2b2b2b;left:0px;width:33.9px;text-align:center;">5</span>
<span class="t" style="left:0.00px;top:468.00px;font-size:17.5px;color:#2b2b2b;left:0px;width:33.9px;text-align:center;">6</span>
<span class="t" style="left:0.00px;top:496.00px;font-size:17.5px;color:#2b2b2b;left:0px;width:33.9px;text-align:center;">7</span>
<span class="t" style="left:0.00px;top:524.00px;font-size:17.5px;color:#2b2b2b;left:0px;width:33.9px;text-align:center;">8</span>
<span class="t" style="left:0.00px;top:552.00px;font-size:17.5px;color:#2b2b2b;left:0px;width:33.9px;text-align:center;">9</span>
<span class="t" style="left:0.00px;top:580.00px;font-size:17.5px;color:#2b2b2b;left:0px;width:33.9px;text-align:center;">10</span>
<span class="t" style="left:0.00px;top:608.00px;font-size:17.5px;color:#2b2b2b;left:0px;width:33.9px;text-align:center;">11</span>
<span class="t" style="left:0.00px;top:636.00px;font-size:17.5px;color:#2b2b2b;left:0px;width:33.9px;text-align:center;">12</span>
<span class="t" style="left:0.00px;top:665.00px;font-size:17.5px;color:#2b2b2b;left:0px;width:33.9px;text-align:center;">13</span>
<span class="t" style="left:0.00px;top:693.00px;font-size:17.5px;color:#2b2b2b;left:0px;width:33.9px;text-align:center;">14</span>
<span class="t" style="left:0.00px;top:721.00px;font-size:17.5px;color:#2b2b2b;left:0px;width:33.9px;text-align:center;">15</span>
<span class="t" style="left:0.00px;top:749.00px;font-size:17.5px;color:#2b2b2b;left:0px;width:33.9px;text-align:center;">16</span>
<span class="t" style="left:0.00px;top:777.00px;font-size:17.5px;color:#2b2b2b;left:0px;width:33.9px;text-align:center;">17</span>
<span class="t" style="left:0.00px;top:805.00px;font-size:17.5px;color:#2b2b2b;left:0px;width:33.9px;text-align:center;">18</span>
<span class="t" style="left:0.00px;top:833.00px;font-size:17.5px;color:#2b2b2b;left:0px;width:33.9px;text-align:center;">19</span>
<span class="t" style="left:0.00px;top:862.00px;font-size:17.5px;color:#2b2b2b;left:0px;width:33.9px;text-align:center;">20</span>
<span class="t" style="left:0.00px;top:890.00px;font-size:17.5px;color:#2b2b2b;left:0px;width:33.9px;text-align:center;">21</span>
<span class="t" style="left:0.00px;top:918.00px;font-size:17.5px;color:#2b2b2b;left:0px;width:33.9px;text-align:center;">22</span>
<span class="t" style="left:0.00px;top:946.00px;font-size:17.5px;color:#2b2b2b;left:0px;width:33.9px;text-align:center;">23</span>
<span class="t" style="left:91.11px;top:426.00px;font-size:17.8px;color:#9b9b9b;transform:scaleX(1.0648);">Сводная таблица1</span>
<span class="t" style="left:75.60px;top:472.00px;font-size:18px;color:#1e1e1e;transform:scaleX(1.0734);">Чтобы создать отчет,</span>
<span class="t" style="left:59.60px;top:500.00px;font-size:18px;color:#1e1e1e;transform:scaleX(1.1126);">выберите необходимые</span>
<span class="t" style="left:79.60px;top:528.00px;font-size:18px;color:#1e1e1e;transform:scaleX(1.0806);">поля в списке полей</span>
<span class="t" style="left:91.60px;top:556.00px;font-size:18px;color:#1e1e1e;transform:scaleX(1.0854);">сводной таблицы</span>
<span class="t" style="left:156.57px;top:978.00px;font-size:18.5px;color:#217346;font-weight:700;transform:scaleX(0.9492);">Лист2</span>
<span class="t" style="left:242.07px;top:978.00px;font-size:18.5px;color:#444;transform:scaleX(0.9417);">Лист1</span>
<span class="t" style="left:1447.00px;top:314.00px;font-size:30px;color:#1e6e42;transform:scaleX(0.9681);-webkit-text-stroke:0.5px #e6e6e6;">Поля сводной таблицы</span>
<span class="t" style="left:1447.16px;top:369.00px;font-size:16.8px;color:#383838;transform:scaleX(0.9820);">Выберите поля для добавления в отчет:</span>
<span class="t" style="left:1449.46px;top:419.00px;font-size:16.8px;color:#666;transform:scaleX(1.0705);">Поиск</span>
<span class="t" style="left:1475.66px;top:468.00px;font-size:16.8px;color:#383838;transform:scaleX(0.9711);">Дата</span>
<span class="t" style="left:1475.66px;top:494.00px;font-size:16.8px;color:#383838;transform:scaleX(1.0154);">Источник трафика</span>
<span class="t" style="left:1475.66px;top:521.00px;font-size:16.8px;color:#383838;transform:scaleX(1.0169);">Кампания</span>
<span class="t" style="left:1475.66px;top:548.00px;font-size:16.8px;color:#383838;transform:scaleX(1.0684);">Клики</span>
<span class="t" style="left:1475.66px;top:575.00px;font-size:16.8px;color:#383838;transform:scaleX(0.9949);">Визиты</span>
<span class="t" style="left:1475.66px;top:602.00px;font-size:16.8px;color:#383838;transform:scaleX(1.0262);">Конверсии</span>
<span class="t" style="left:1475.66px;top:628.00px;font-size:16.8px;color:#383838;transform:scaleX(0.9867);">Доход, ₽</span>
<span class="t" style="left:1451.66px;top:682.00px;font-size:16.8px;color:#383838;transform:scaleX(1.0075);">Перетащите поля в нужную область:</span>
<span class="t" style="left:1482.16px;top:728.00px;font-size:16.8px;color:#383838;transform:scaleX(1.0505);">Фильтры</span>
<span class="t" style="left:1710.46px;top:728.00px;font-size:16.8px;color:#383838;transform:scaleX(1.0305);">Столбцы</span>
<span class="t" style="left:1482.16px;top:842.00px;font-size:16.8px;color:#383838;transform:scaleX(1.0436);">Строки</span>
<span class="t" style="left:1709.96px;top:842.00px;font-size:16.8px;color:#383838;transform:scaleX(1.0259);">Значения</span>
<span class="t" style="left:1477.16px;top:970.00px;font-size:16.8px;color:#383838;transform:scaleX(1.0033);">Отложить обновление макета</span>
<span class="t" style="left:1817.66px;top:970.00px;font-size:16.8px;color:#b3b3b3;transform:scaleX(1.0041);">Обновить</span>
<span class="t" style="left:1184.60px;top:105.00px;font-size:17px;color:#1a1a1a;font-style:italic;font-family:'Liberation Serif', serif;-webkit-text-stroke:0.3px #1a1a1a;">f</span>
<span class="t" style="left:1189.20px;top:109.00px;font-size:12.5px;color:#1a1a1a;font-style:italic;font-family:'Liberation Serif', serif;-webkit-text-stroke:0.3px #1a1a1a;">x</span>
<span class="t" style="left:1184.20px;top:136.00px;font-size:19px;color:#a6a4a6;font-style:italic;font-family:'Liberation Serif', serif;-webkit-text-stroke:0.3px #a6a4a6;">f</span>
<span class="t" style="left:1189.60px;top:141.00px;font-size:13px;color:#a6a4a6;font-style:italic;font-family:'Liberation Serif', serif;-webkit-text-stroke:0.3px #a6a4a6;">x</span>
<span class="t" style="left:1685.77px;top:837.00px;font-size:20.5px;color:#7a7a7a;font-family:'Liberation Serif', serif;transform:scaleX(1.2186);">Σ</span>
</body></html>
